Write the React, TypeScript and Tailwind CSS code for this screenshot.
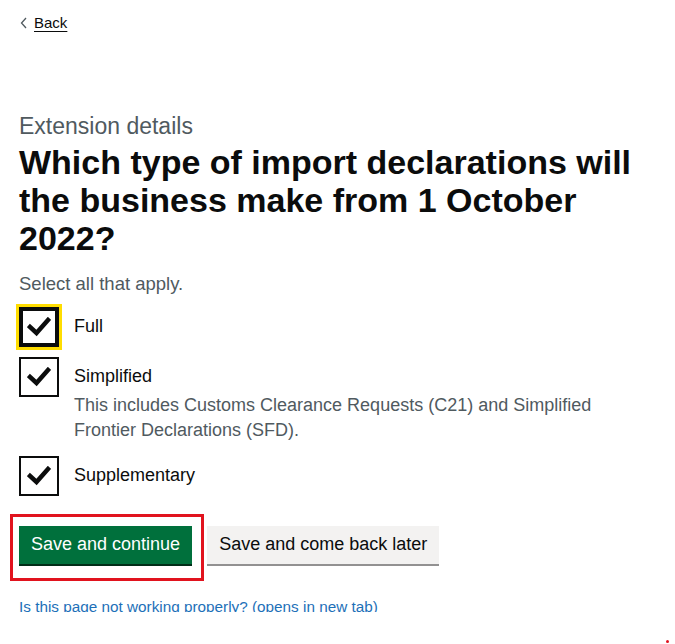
import React from 'react';

const Tick: React.FC = () => (
  <svg width="24" height="20" viewBox="0 0 24 20" className="block">
    <path d="M3 10 L9.5 16 L21 3" fill="none" stroke="#0b0c0c" strokeWidth="4.5" strokeLinecap="square" />
  </svg>
);

type Option = { label: string; hint?: string[]; focused?: boolean };

const options: Option[] = [
  { label: 'Full', focused: true },
  {
    label: 'Simplified',
    hint: ['This includes Customs Clearance Requests (C21) and Simplified', 'Frontier Declarations (SFD).'],
  },
  { label: 'Supplementary' },
];

const CheckboxItem: React.FC<{ option: Option }> = ({ option }) => (
  <div className="flex">
    <div className="w-[40px] shrink-0">
      {option.focused ? (
        <div className="-m-[3px] border-[3px] border-[#ffdd00]">
          <div className="w-[40px] h-[40px] border-[4px] border-[#0b0c0c] flex items-center justify-center">
            <Tick />
          </div>
        </div>
      ) : (
        <div className="w-[40px] h-[40px] border-2 border-[#0b0c0c] flex items-center justify-center">
          <Tick />
        </div>
      )}
    </div>
    <div className="pl-[15px]">
      <div className="h-[40px] flex items-center text-[18px] text-[#0b0c0c]">{option.label}</div>
      {option.hint && (
        <div className="text-[18px] leading-[25px] text-[#505a5f] -mt-[4px] mb-[3px]">
          {option.hint.map((line) => (
            <div key={line}>{line}</div>
          ))}
        </div>
      )}
    </div>
  </div>
);

export default function App() {
  return (
    <div className="relative h-[644px] w-[675px] bg-white overflow-hidden" style={{ fontFamily: '"Liberation Sans", Arial, sans-serif' }}>
      <div className="h-[612px] overflow-hidden px-[19px]">
        <div className="pt-[12px] flex items-center gap-[6px] text-[15px] text-[#0b0c0c]">
          <svg width="8" height="12" viewBox="0 0 8 12" className="ml-[1px]">
            <path d="M6 1 L1.5 6 L6 11" fill="none" stroke="#505a5f" strokeWidth="1.3" />
          </svg>
          <a className="underline underline-offset-[3px]">Back</a>
        </div>

        <div className="mt-[77px] text-[23px] leading-[28px] text-[#505a5f]">Extension details</div>
        <h1 className="mt-[3px] text-[34px] leading-[38px] font-bold text-[#0b0c0c]">
          Which type of import declarations will the business make from 1 October 2022?
        </h1>

        <div className="mt-[15px] text-[18.5px] leading-[24px] text-[#505a5f]">Select all that apply.</div>

        <div className="mt-[11px] flex flex-col gap-[10px]">
          {options.map((o) => (
            <CheckboxItem key={o.label} option={o} />
          ))}
        </div>

        <div className="mt-[18px] -ml-[9px] flex items-start">
          <div className="border-[3px] border-[#e1131e] pl-[6px] pt-[9px] pb-[14px] pr-[9px]">
            <button className="block h-[38px] px-[12px] bg-[#00703c] text-white text-[18px] shadow-[0_2px_0_#002d18]">
              Save and continue
            </button>
          </div>
          <button className="ml-[3px] mt-[12px] h-[38px] px-[12px] bg-[#f3f2f1] text-[#0b0c0c] text-[18px] shadow-[0_2px_0_#929191]">
            Save and come back later
          </button>
        </div>

        <div className="mt-[15px] text-[15.3px] leading-[22px] text-[#1d70b8]">Is this page not working properly? (opens in new tab)</div>
      </div>
      <div className="absolute left-[666px] top-[640px] w-[3px] h-[3px] rounded-full bg-[#e1131e]" />
    </div>
  );
}
